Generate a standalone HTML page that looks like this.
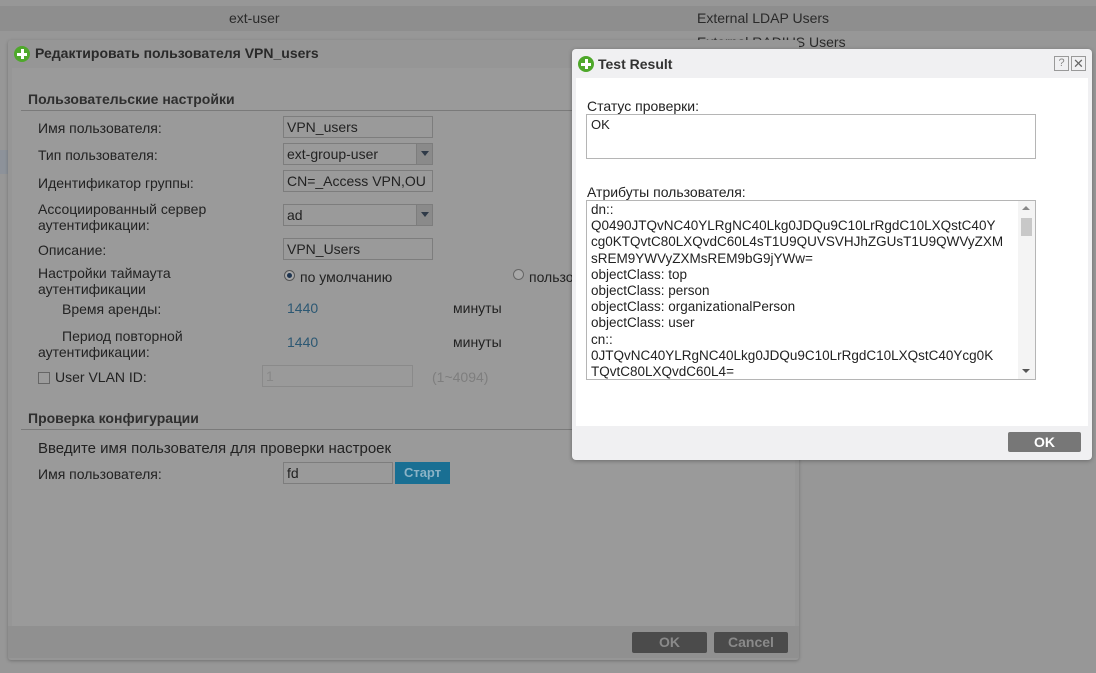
<!DOCTYPE html>
<html><head><meta charset="utf-8">
<style>
*{margin:0;padding:0;box-sizing:border-box}
html,body{background:#979797}
body{width:1096px;height:673px;font-family:"Liberation Sans",sans-serif;font-size:14px;color:#2a2a2a;position:relative;overflow:hidden}
.a{position:absolute}
.lbl{position:absolute;font-size:14px;color:#222;white-space:nowrap}
.inp{position:absolute;background:#9a9a9a;border:1px solid #7d7d7d;height:22px;padding:2px 3px;font-size:14px;color:#222;white-space:nowrap;overflow:hidden}
.sel-arr{position:absolute;right:0;top:0;width:16px;height:20px;background:#8a8a8a;border-left:1px solid #7d7d7d}
.sel-arr:after{content:"";position:absolute;left:4px;top:7px;border:4px solid transparent;border-top:5px solid #2f3a48}
.plus{position:absolute;width:16px;height:16px;border-radius:50%;background:#4fa82b}
.plus:before{content:"";position:absolute;left:3px;top:6.5px;width:10px;height:3px;background:#fff}
.plus:after{content:"";position:absolute;left:6.5px;top:3px;width:3px;height:10px;background:#fff}
.btn{position:absolute;background:#4b4b4b;color:#8a8a8a;font-weight:bold;font-size:14px;text-align:center;border-radius:2px}
.mono{font-size:13.5px;line-height:16.2px;color:#222}
</style></head><body>
<div class="a" style="left:0;top:6px;width:1096px;height:25px;background:#8e8e8e"></div>
<div class="lbl" style="left:229px;top:10px;color:#2a2a2a">ext-user</div>
<div class="lbl" style="left:697px;top:10px;color:#2a2a2a">External LDAP Users</div>
<div class="lbl" style="left:697px;top:34px;color:#2a2a2a">External RADIUS Users</div>
<div class="a" style="left:0;top:150px;width:10px;height:24px;background:#8d929a"></div>

<div class="a" style="left:8px;top:40px;width:791px;height:620px;background:#969696;border-radius:3px;box-shadow:0 1px 3px rgba(0,0,0,.25)"></div>
<div class="a" style="left:12px;top:68px;width:783px;height:558px;background:#9a9a9a"></div>
<div class="a" style="left:8px;top:626px;width:791px;height:32px;background:#909090"></div>
<div class="plus" style="left:14px;top:46px"></div>
<div class="lbl" style="left:35px;top:45px;font-weight:bold;font-size:14px;color:#2a2a2a">Редактировать пользователя VPN_users</div>

<div class="lbl" style="left:28px;top:91px;font-weight:bold;color:#2e2e2e">Пользовательские настройки</div>
<div class="a" style="left:21px;top:110px;width:555px;height:1px;background:#7a7a7a"></div>

<div class="lbl" style="left:38px;top:120px">Имя пользователя:</div>
<div class="inp" style="left:283px;top:116px;width:150px">VPN_users</div>
<div class="lbl" style="left:38px;top:147px">Тип пользователя:</div>
<div class="inp" style="left:283px;top:143px;width:150px">ext-group-user<div class="sel-arr"></div></div>
<div class="lbl" style="left:38px;top:175px">Идентификатор группы:</div>
<div class="inp" style="left:283px;top:170px;width:150px">CN=_Access VPN,OU</div>
<div class="lbl" style="left:38px;top:201px;line-height:16px">Ассоциированный сервер<br>аутентификации:</div>
<div class="inp" style="left:283px;top:204px;width:150px">ad<div class="sel-arr"></div></div>
<div class="lbl" style="left:38px;top:242px">Описание:</div>
<div class="inp" style="left:283px;top:238px;width:150px">VPN_Users</div>
<div class="lbl" style="left:38px;top:265px;line-height:16px">Настройки таймаута<br>аутентификации</div>
<div class="a" style="left:284px;top:270px;width:11px;height:11px;border-radius:50%;border:1px solid #555;background:#a8a8a8"><div class="a" style="left:2px;top:2px;width:5px;height:5px;border-radius:50%;background:#1f3550"></div></div>
<div class="lbl" style="left:300px;top:269px">по умолчанию</div>
<div class="a" style="left:513px;top:269px;width:11px;height:11px;border-radius:50%;border:1px solid #666;background:#a8a8a8"></div>
<div class="lbl" style="left:529px;top:269px">пользо</div>
<div class="lbl" style="left:62px;top:301px">Время аренды:</div>
<div class="lbl" style="left:287px;top:300px;color:#2c5873">1440</div>
<div class="lbl" style="left:453px;top:300px">минуты</div>
<div class="lbl" style="left:38px;top:328px;line-height:16px"><span style="padding-left:24px">Период повторной</span><br>аутентификации:</div>
<div class="lbl" style="left:287px;top:334px;color:#2c5873">1440</div>
<div class="lbl" style="left:453px;top:334px">минуты</div>
<div class="a" style="left:38px;top:372px;width:12px;height:12px;border:1px solid #666;background:#9c9c9c"></div>
<div class="lbl" style="left:55px;top:369px">User VLAN ID:</div>
<div class="inp" style="left:262px;top:365px;width:151px;border-color:#8a8a8a;color:#888">1</div>
<div class="lbl" style="left:432px;top:369px;color:#7e7e7e">(1~4094)</div>

<div class="lbl" style="left:28px;top:410px;font-weight:bold;color:#2e2e2e">Проверка конфигурации</div>
<div class="a" style="left:21px;top:429px;width:555px;height:1px;background:#7a7a7a"></div>
<div class="lbl" style="left:38px;top:440px;font-size:15px">Введите имя пользователя для проверки настроек</div>
<div class="lbl" style="left:38px;top:466px">Имя пользователя:</div>
<div class="inp" style="left:283px;top:462px;width:110px">fd</div>
<div class="a" style="left:395px;top:462px;width:55px;height:22px;background:#196f93;color:#8bb3c6;font-weight:bold;font-size:13px;text-align:center;line-height:22px">Старт</div>

<div class="btn" style="left:632px;top:632px;width:75px;height:21px;line-height:21px">OK</div>
<div class="btn" style="left:714px;top:632px;width:74px;height:21px;line-height:21px">Cancel</div>

<div class="a" style="left:572px;top:49px;width:520px;height:411px;background:#f0f0f2;border-radius:4px;box-shadow:0 1px 4px rgba(0,0,0,.3)"></div>
<div class="a" style="left:576px;top:78px;width:512px;height:348px;background:#fff"></div>
<div class="plus" style="left:578px;top:56px"></div>
<div class="lbl" style="left:598px;top:56px;font-weight:bold;color:#333">Test Result</div>
<div class="a" style="left:1054px;top:56px;width:15px;height:15px;border:1px solid #999;color:#888;font-size:11px;text-align:center;line-height:13px">?</div>
<div class="a" style="left:1071px;top:56px;width:15px;height:15px;border:1px solid #999;color:#666;font-size:13px;text-align:center;line-height:13px">✕</div>

<div class="lbl" style="left:587px;top:98px">Статус проверки:</div>
<div class="a" style="left:586px;top:114px;width:450px;height:45px;border:1px solid #b5b5b5;padding:1px 4px"><span class="mono" style="font-size:13px">OK</span></div>
<div class="lbl" style="left:587px;top:184px">Атрибуты пользователя:</div>
<div class="a" style="left:586px;top:200px;width:450px;height:180px;border:1px solid #b5b5b5;overflow:hidden">
  <div class="a mono" style="left:4px;top:1px;width:430px;white-space:pre">dn::
Q0490JTQvNC40YLRgNC40Lkg0JDQu9C10LrRgdC10LXQstC40Y
cg0KTQvtC80LXQvdC60L4sT1U9QUVSVHJhZGUsT1U9QWVyZXM
sREM9YWVyZXMsREM9bG9jYWw=
objectClass: top
objectClass: person
objectClass: organizationalPerson
objectClass: user
cn::
0JTQvNC40YLRgNC40Lkg0JDQu9C10LrRgdC10LXQstC40Ycg0K
TQvtC80LXQvdC60L4=</div>
  <div class="a" style="right:0;top:0;width:17px;height:178px;background:#f4f4f4"></div>
  <div class="a" style="right:5px;top:5px;border:4px solid transparent;border-bottom:4px solid #888;border-top:0"></div>
  <div class="a" style="right:3px;top:17px;width:11px;height:18px;background:#c8c8c8"></div>
  <div class="a" style="right:5px;bottom:6px;border:4px solid transparent;border-top:4px solid #555;border-bottom:0"></div>
</div>
<div class="a" style="left:1008px;top:432px;width:73px;height:20px;background:#777;color:#fff;font-weight:bold;font-size:14px;text-align:center;line-height:20px;border-radius:2px">OK</div>
</body></html>
